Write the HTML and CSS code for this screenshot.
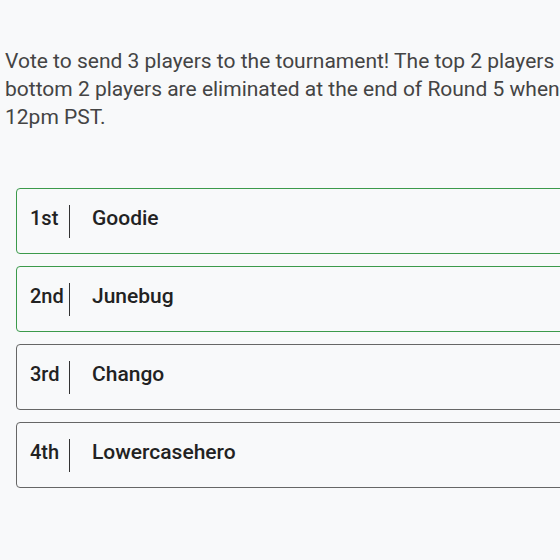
FILE: index.html
```html
<!DOCTYPE html>
<html>
<head>
<meta charset="utf-8">
<link rel="stylesheet" href="styles.css">
</head>
<body>
<main class="page">
  <p class="intro">Vote to send 3 players to the tournament! The top 2 players<br>bottom 2 players are eliminated at the end of Round 5 when<br>12pm PST.</p>
  <ol class="ranking">
    <li class="card card-qualified"><span class="rank">1st</span><span class="name">Goodie</span></li>
    <li class="card card-qualified"><span class="rank">2nd</span><span class="name">Junebug</span></li>
    <li class="card"><span class="rank">3rd</span><span class="name">Chango</span></li>
    <li class="card"><span class="rank">4th</span><span class="name">Lowercasehero</span></li>
  </ol>
</main>
</body>
</html>
```

FILE: styles.css
```css
html, body {
  margin: 0;
  padding: 0;
  background: #f8f9fa;
  overflow: hidden;
}
.page {
  width: 640px;
  font-family: Roboto, "Liberation Sans", sans-serif;
}
.intro {
  margin: 47px 0 0 5px;
  font-size: 21px;
  line-height: 28px;
  color: #444;
  white-space: nowrap;
}
.ranking {
  list-style: none;
  margin: 57px 0 0 16px;
  padding: 0;
  display: flex;
  flex-direction: column;
  gap: 12px;
}
.card {
  box-sizing: border-box;
  height: 66px;
  width: 620px;
  display: flex;
  align-items: center;
  padding: 0 13px;
  border: 1.5px solid #666;
  border-radius: 4px;
  background: #f8f9fa;
  color: #222;
  font-size: 21px;
  font-weight: 500;
}
.card-qualified {
  border-color: #3b9a4b;
}
.rank {
  box-sizing: border-box;
  width: 40px;
  height: 33px;
  line-height: 26px;
  padding-bottom: 7px;
  border-right: 1.5px solid #333;
  white-space: nowrap;
  font-size: 20px;
}
.name {
  padding-left: 22px;
  height: 33px;
  line-height: 26px;
  padding-bottom: 7px;
  box-sizing: border-box;
}
```
